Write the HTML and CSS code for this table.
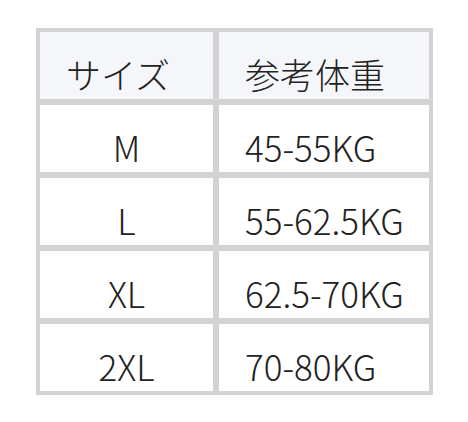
FILE: index.html
```html
<!DOCTYPE html>
<html lang="ja">
<head>
<meta charset="utf-8">
<link rel="stylesheet" href="styles.css">
</head>
<body>
<table class="size-table">
  <colgroup>
    <col class="col-size">
    <col class="col-weight">
  </colgroup>
  <thead>
    <tr><th>サイズ</th><th>参考体重</th></tr>
  </thead>
  <tbody>
    <tr><td class="size">M</td><td>45-55KG</td></tr>
    <tr><td class="size">L</td><td>55-62.5KG</td></tr>
    <tr><td class="size">XL</td><td>62.5-70KG</td></tr>
    <tr><td class="size">2XL</td><td>70-80KG</td></tr>
  </tbody>
</table>
</body>
</html>
```

FILE: styles.css
```css
html, body {
  margin: 0;
  background: #ffffff;
}
body {
  padding: 28px 0 0 36px;
  font-family: "Noto Sans CJK JP", "Noto Sans", sans-serif;
  color: #222222;
}
.size-table {
  table-layout: fixed;
  width: 397px;
  border-collapse: separate;
  border-spacing: 0;
  border: 1px solid #d3d3d3;
}
.col-size { width: 179px; }
.col-weight { width: 216px; }
.size-table th,
.size-table td {
  border: 3px solid #d3d3d3;
  padding: 24px 26px 8px 26px;
  font-size: 35px;
  line-height: 35px;
  font-weight: 300;
  text-align: left;
  white-space: nowrap;
}
.size-table th {
  background: #f5f6fa;
}
.size-table td.size {
  text-align: center;
}
```
